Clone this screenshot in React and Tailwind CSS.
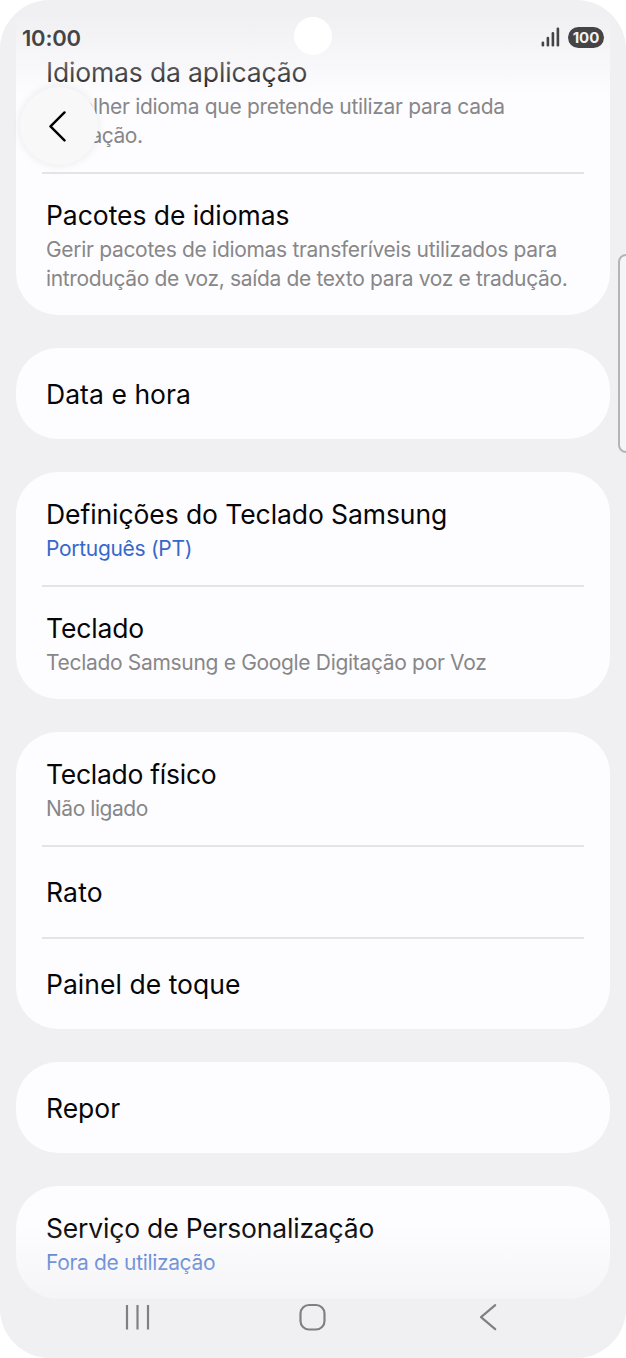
import React from "react";
import clsx from "clsx";

const sections = [
  [
    {
      title: "Idiomas da aplicação",
      lines: ["Escolher idioma que pretende utilizar para cada", "aplicação."],
      track: "tracking-[-0.15px]",
      subTrack: ["tracking-[-0.3px]", "tracking-[-0.5px]"],
    },
    {
      title: "Pacotes de idiomas",
      lines: [
        "Gerir pacotes de idiomas transferíveis utilizados para",
        "introdução de voz, saída de texto para voz e tradução.",
      ],
      track: "tracking-[-0.05px]",
      subTrack: ["tracking-[-0.31px]", "tracking-[-0.34px]"],
    },
  ],
  [{ title: "Data e hora", track: "tracking-[0.05px]" }],
  [
    {
      title: "Definições do Teclado Samsung",
      lines: ["Português (PT)"],
      accent: true,
      track: "tracking-[-0.08px]",
      subTrack: ["tracking-[-0.3px]"],
    },
    {
      title: "Teclado",
      lines: ["Teclado Samsung e Google Digitação por Voz"],
      track: "tracking-[-0.15px]",
      subTrack: ["tracking-[-0.32px]"],
    },
  ],
  [
    {
      title: "Teclado físico",
      lines: ["Não ligado"],
      track: "tracking-[-0.27px]",
      subTrack: ["tracking-[-0.45px]"],
    },
    { title: "Rato", track: "tracking-[0.2px]" },
    { title: "Painel de toque", track: "tracking-[0.03px]" },
  ],
  [{ title: "Repor" }],
  [
    {
      title: "Serviço de Personalização",
      lines: ["Fora de utilização"],
      accent: true,
      track: "tracking-[-0.19px]",
      subTrack: ["tracking-[-0.34px]"],
    },
  ],
];

const Row = ({ title, lines, accent, track, subTrack }) => (
  <div
    className={clsx(
      "px-1",
      lines ? "pt-[25px] pb-[22px]" : "pt-[29px] pb-[28px]"
    )}
  >
    <h2
      className={clsx(
        "text-[26.5px] leading-[34px] font-[390] text-[#060608] whitespace-nowrap",
        track
      )}
    >
      {title}
    </h2>
    {lines && (
      <p
        className={clsx(
          "mt-[3px] text-[21px] leading-[29px] font-[390] whitespace-nowrap",
          accent ? "text-[#3668cb]" : "text-[#878789]"
        )}
      >
        {lines.map((line, i) => (
          <span key={line} className={clsx("block", subTrack[i])}>
            {line}
          </span>
        ))}
      </p>
    )}
  </div>
);

const Card = ({ rows, first }) => (
  <section
    className={clsx(
      "bg-[#fdfdff] px-[26px]",
      first ? "rounded-b-[42px] pt-[30px]" : "rounded-[42px]"
    )}
  >
    {rows.map((row, i) => (
      <React.Fragment key={row.title}>
        {i > 0 && <div className="h-0.5 -mb-px bg-[#e4e4e6]" />}
        <Row {...row} />
      </React.Fragment>
    ))}
  </section>
);

const StatusBar = () => (
  <header className="absolute inset-x-0 top-0 h-[75px] flex items-center justify-between px-[22px] text-[#444446]">
    <span className="mt-px text-[22px] font-[560] leading-none tracking-[-0.2px]">
      10:00
    </span>
    <div className="flex items-center gap-[7px]">
      <svg width="20" height="21" viewBox="0 0 20 21" fill="currentColor">
        <rect x="0.6" y="14.5" width="2.6" height="5" rx="1.2" />
        <rect x="5.6" y="9.7" width="2.6" height="9.8" rx="1.2" />
        <rect x="10.6" y="5" width="2.6" height="14.5" rx="1.2" />
        <rect x="15.6" y="0.5" width="2.6" height="19" rx="1.2" />
      </svg>
      <span className="flex items-center justify-center w-9 h-[21px] rounded-full bg-[#444446] text-[#f2f2f4] text-[15px] font-bold leading-none">
        100
      </span>
    </div>
  </header>
);

const NavBar = () => (
  <nav className="absolute inset-x-0 bottom-[27px] h-7 text-[#808082]">
    <svg
      className="w-full h-full"
      viewBox="0 0 626 28"
      fill="none"
      stroke="currentColor"
      strokeWidth="2.2"
      strokeLinejoin="round"
    >
      <path d="M127 2v24.5M137.5 2v24.5M148 2v24.5" />
      <rect x="300.5" y="2" width="24" height="24.5" rx="8.5" />
      <path d="M495.2 2.2 481 14.2l14.2 12" strokeLinecap="round" />
    </svg>
  </nav>
);

export default function App() {
  return (
    <div className="w-[626px] h-[1358px] bg-white font-['Inter',sans-serif]">
      <div className="relative h-full overflow-hidden rounded-[50px] bg-[#f0f0f2]">
        <main className="flex flex-col gap-[33px] pl-4 pr-[16.5px]">
          {sections.map((rows, i) => (
            <Card key={rows[0].title} rows={rows} first={i === 0} />
          ))}
        </main>

        {/* content fades out under the system bars */}
        <div className="absolute inset-x-0 top-0 h-[98px] bg-linear-to-b from-[#f0f0f2] from-15% to-[#f0f0f2]/0" />
        <div className="absolute inset-x-0 bottom-0 h-[134px] bg-linear-to-t from-[#f0f0f2] from-10% to-[#f0f0f2]/0" />

        <StatusBar />
        <div className="absolute left-[294px] top-[17px] size-[38px] rounded-full bg-white" />

        <button className="absolute left-5 top-[87px] size-[78px] rounded-full bg-[#f8f8f8] flex items-center justify-center shadow-[0_0_10px_rgba(0,0,0,0.09)]">
          <svg
            width="20"
            height="32"
            viewBox="0 0 20 32"
            fill="none"
            stroke="#000"
            strokeWidth="2.4"
            strokeLinecap="round"
            strokeLinejoin="round"
          >
            <path d="M15.5 2.4 1.5 16.4l14 14" />
          </svg>
        </button>

        {/* edge panel handle */}
        <div className="absolute -right-3 top-[254px] w-[20px] h-[199px] rounded-[8px] border-2 border-[#b4b4b6] bg-[#f5f5f7]" />

        <NavBar />
      </div>
    </div>
  );
}
